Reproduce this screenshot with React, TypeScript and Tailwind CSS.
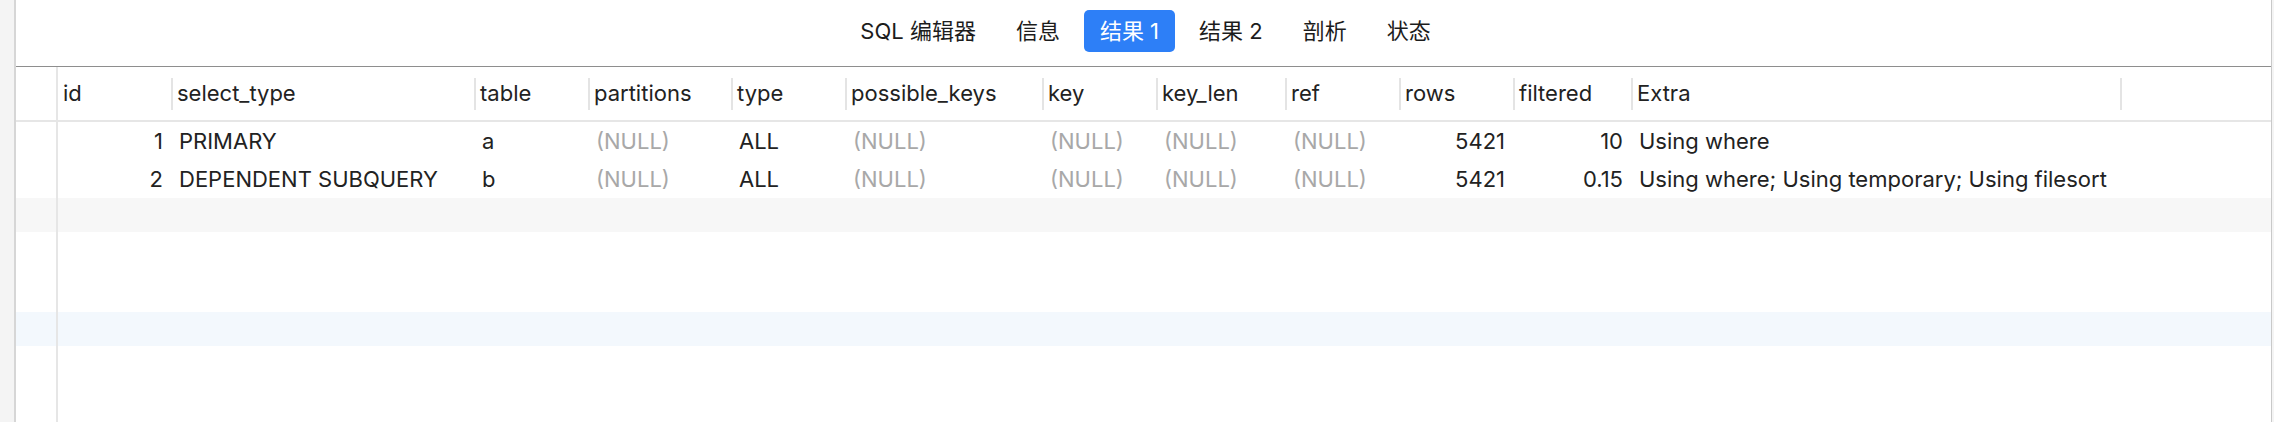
import React from 'react'

type Column = {
    name: string
    width: string
    right?: boolean
}

const columns: Column[] = [
    { name: 'id', width: 'w-[113px]', right: true },
    { name: 'select_type', width: 'w-[303px]' },
    { name: 'table', width: 'w-[114px]' },
    { name: 'partitions', width: 'w-[143px]' },
    { name: 'type', width: 'w-[114px]' },
    { name: 'possible_keys', width: 'w-[197px]' },
    { name: 'key', width: 'w-[114px]' },
    { name: 'key_len', width: 'w-[129px]' },
    { name: 'ref', width: 'w-[114px]' },
    { name: 'rows', width: 'w-[114px]', right: true },
    { name: 'filtered', width: 'w-[118px]', right: true },
    { name: 'Extra', width: 'w-[489px]' }
]

const data: (string | null)[][] = [
    ['1', 'PRIMARY', 'a', null, 'ALL', null, null, null, null, '5421', '10', 'Using where'],
    [
        '2',
        'DEPENDENT SUBQUERY',
        'b',
        null,
        'ALL',
        null,
        null,
        null,
        null,
        '5421',
        '0.15',
        'Using where; Using temporary; Using filesort'
    ]
]

const tabs = ['SQL 编辑器', '信息', '结果 1', '结果 2', '剖析', '状态']

// stripe colour per row slot, empty string = plain white
const stripes = ['', '', 'bg-[#f7f7f7]', '', '', 'bg-[#f3f8fd]', '', '']

export default function App() {
    return (
        <div className="flex h-[422px] w-[2274px] overflow-hidden bg-white font-[Inter,'Noto_Sans_CJK_SC',sans-serif] text-[#222]">
            <div className="w-[16px] shrink-0 border-r-2 border-[#d6d6d6] bg-[#f4f4f4]" />

            <div className="flex min-w-0 flex-1 flex-col">
                <div className="flex h-[67px] shrink-0 justify-center gap-x-[8px] border-b border-[#8e8e8e] pt-[10px] pl-[4px]">
                    {tabs.map(tab => (
                        <div
                            key={tab}
                            className={
                                tab === '结果 1'
                                    ? 'flex h-[42px] items-center rounded-[5px] bg-[#2d7ff7] px-[16px] text-[22px] text-white'
                                    : 'flex h-[42px] items-center px-[16px] text-[22px] text-[#1c1c1c]'
                            }
                        >
                            {tab}
                        </div>
                    ))}
                </div>

                <div className="flex h-[55px] shrink-0 items-center border-b-2 border-[#e6e6e6] text-[22px]">
                    <div className="h-full w-[42px] shrink-0 border-r-2 border-[#e6e6e6]" />
                    {columns.map((col, i) => (
                        <div
                            key={col.name}
                            className={`flex h-full shrink-0 items-center ${col.width}`}
                        >
                            {i > 0 && (
                                <div className="h-[32px] w-[2px] bg-[#e4e4e4]" />
                            )}
                            <span className={i > 0 ? 'pl-[4px]' : 'pl-[5px]'}>
                                {col.name}
                            </span>
                        </div>
                    ))}
                    <div className="flex h-full flex-1 items-center">
                        <div className="h-[32px] w-[2px] bg-[#e4e4e4]" />
                    </div>
                </div>

                <div className="flex min-h-0 flex-1 overflow-hidden">
                    <div className="w-[42px] shrink-0 border-r-2 border-[#e6e6e6]">
                        {stripes.map((s, i) => (
                            <div key={i} className="h-[38px]">
                                <div className={`h-[34px] ${s}`} />
                            </div>
                        ))}
                    </div>
                    <div className="min-w-0 flex-1 text-[22px]">
                        {stripes.map((s, i) => {
                            const row = data[i]
                            return (
                                <div key={i} className="h-[38px]">
                                    <div className={`flex items-center ${s ? 'h-[34px]' : 'h-[38px]'} ${s}`}>
                                        {row &&
                                            columns.map((col, j) => (
                                                <div
                                                    key={col.name}
                                                    className={`shrink-0 whitespace-nowrap ${col.width} ${
                                                        col.right ? 'pr-[8px] text-right' : 'pl-[8px]'
                                                    } ${row[j] === null ? 'text-[#a8a8a8]' : ''}`}
                                                >
                                                    {row[j] ?? '(NULL)'}
                                                </div>
                                            ))}
                                    </div>
                                </div>
                            )
                        })}
                    </div>
                </div>
            </div>

            <div className="w-[3px] shrink-0 border-l border-[#c9c9c9] bg-[#f4f4f4]" />
        </div>
    )
}
